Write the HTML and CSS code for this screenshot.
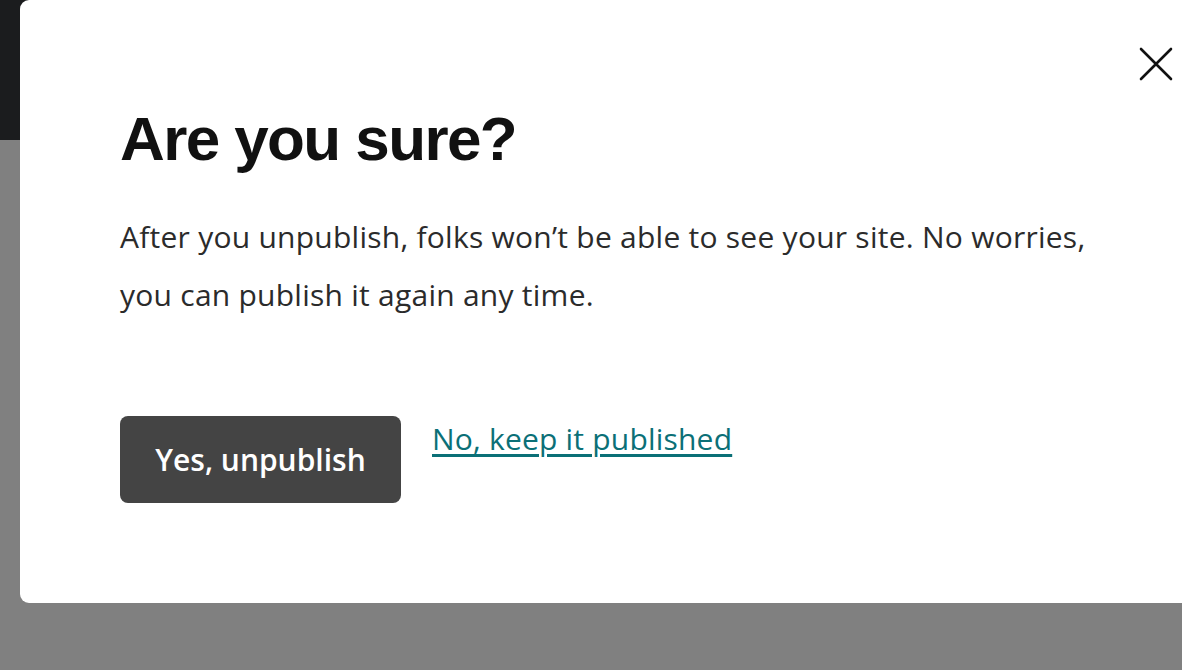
FILE: index.html
```html
<!DOCTYPE html>
<html lang="en">
<head>
    <meta charset="UTF-8">
    <meta name="viewport" content="width=device-width, initial-scale=1.0">
    <title>Unpublish site</title>
    <link rel="stylesheet" href="styles.css">
</head>
<body>

    <div class="topbar"></div>

    <div class="modal">
        <button class="close" aria-label="Close">
            <svg width="34" height="34" viewBox="0 0 34 34">
                <path d="M2 2 L32 32 M32 2 L2 32" stroke="#111" stroke-width="2.6" stroke-linecap="round" fill="none"/>
            </svg>
        </button>

        <h1>Are you sure?</h1>
        <p class="message">After you unpublish, folks won’t be able to see your site. No worries, you can publish it again any time.</p>

        <div class="actions">
            <button class="primary">Yes, unpublish</button>
            <a href="#" class="keep">No, keep it published</a>
        </div>
    </div>

</body>
</html>
```

FILE: styles.css
```css
html, body {
    margin: 0;
    height: 100%;
}
body {
    font-family: "Open Sans", "Liberation Sans", Arial, sans-serif;
    background-color: #808080;
    overflow: hidden;
}
.topbar {
    height: 140px;
    background-color: #1b1c1e;
}
.modal {
    position: absolute;
    top: 0;
    left: 20px;
    right: -40px;
    height: 603px;
    background: white;
    border-radius: 9px;
    box-sizing: border-box;
    padding: 101px 0 0 100px;
}
.close {
    position: absolute;
    top: 47px;
    right: 49px;
    background: none;
    border: none;
    padding: 0;
    cursor: pointer;
}
.close svg {
    display: block;
}
h1 {
    margin: 0;
    font-family: "Liberation Sans", Arial, sans-serif;
    font-size: 62px;
    line-height: 76px;
    font-weight: bold;
    letter-spacing: -1.6px;
    color: #111;
}
.message {
    margin: 31px 0 0;
    max-width: 990px;
    font-size: 30px;
    line-height: 58px;
    letter-spacing: 0.25px;
    color: #2b2b2b;
}
.actions {
    display: flex;
    align-items: flex-start;
    gap: 31px;
    margin-top: 92px;
}
.primary {
    width: 281px;
    height: 87px;
    background-color: #444;
    color: white;
    border: none;
    border-radius: 8px;
    font-family: inherit;
    font-size: 30px;
    font-weight: 600;
    cursor: pointer;
}
.keep {
    margin-top: 2px;
    font-size: 30px;
    letter-spacing: 0.2px;
    color: #0b7077;
    text-decoration: underline;
    text-underline-offset: 4px;
}
```
